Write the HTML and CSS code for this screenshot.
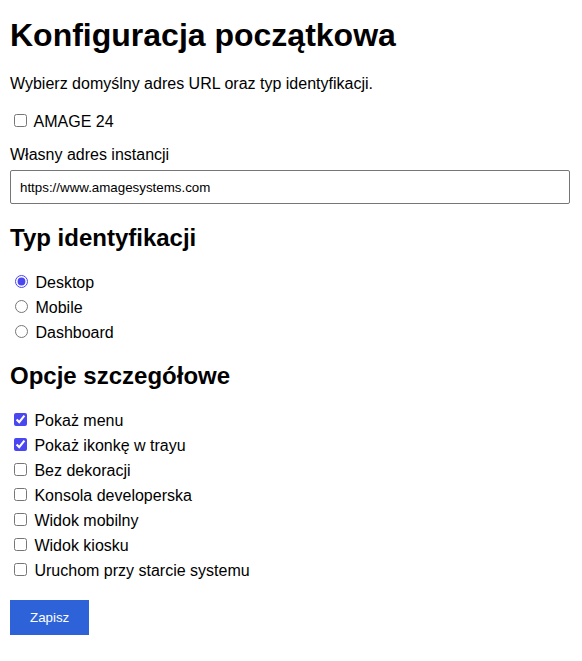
FILE: index.html
```html
<!DOCTYPE html>
<html lang="pl">
<head>
<meta charset="utf-8">
<title>Konfiguracja początkowa</title>
<link rel="stylesheet" href="styles.css">
</head>
<body>
<main class="setup">
  <h1 class="title">Konfiguracja początkowa</h1>
  <p class="intro">Wybierz domyślny adres URL oraz typ identyfikacji.</p>
  <label class="option option-first"><input type="checkbox"> AMAGE 24</label>
  <label class="field-label" for="url">Własny adres instancji</label>
  <input class="url-input" id="url" type="text" value="https://www.amagesystems.com">

  <h2 class="section section-type">Typ identyfikacji</h2>
  <div class="group group-type">
    <label class="option"><input type="radio" name="type" checked> Desktop</label>
    <label class="option"><input type="radio" name="type"> Mobile</label>
    <label class="option"><input type="radio" name="type"> Dashboard</label>
  </div>

  <h2 class="section section-options">Opcje szczegółowe</h2>
  <div class="group group-options">
    <label class="option"><input type="checkbox" checked> Pokaż menu</label>
    <label class="option"><input type="checkbox" checked> Pokaż ikonkę w trayu</label>
    <label class="option"><input type="checkbox"> Bez dekoracji</label>
    <label class="option"><input type="checkbox"> Konsola developerska</label>
    <label class="option"><input type="checkbox"> Widok mobilny</label>
    <label class="option"><input type="checkbox"> Widok kiosku</label>
    <label class="option"><input type="checkbox"> Uruchom przy starcie systemu</label>
  </div>

  <button class="save" type="button">Zapisz</button>
</main>
</body>
</html>
```

FILE: styles.css
```css
html, body {
  margin: 0;
  padding: 0;
  background: #ffffff;
}

body {
  font-family: "Liberation Sans", Arial, sans-serif;
  font-size: 16px;
  color: #000000;
  accent-color: #4a46f0;
}

.setup {
  padding: 10px;
  width: 560px;
}

.title {
  font-size: 32px;
  font-weight: bold;
  line-height: normal;
  margin: 6.5px 0 0 0;
}

.intro {
  margin: 21.7px 0 0 0;
  line-height: normal;
}

.option {
  display: block;
  line-height: 25px;
}

.option-first {
  margin-top: 15.5px;
}

.field-label {
  display: block;
  line-height: normal;
  margin-top: 12px;
}

.url-input {
  display: block;
  box-sizing: border-box;
  width: 560px;
  height: 34px;
  margin: 6.5px 0 0 0;
  padding: 0 9px;
  border: 1px solid #767676;
  border-radius: 2px;
  font-family: "Liberation Sans", Arial, sans-serif;
  font-size: 13.33px;
  color: #000000;
}

.section {
  font-size: 24px;
  font-weight: bold;
  line-height: normal;
  margin: 0;
}

.section-type {
  margin-top: 20px;
}

.section-options {
  margin-top: 17px;
}

.group-type {
  margin-top: 17.4px;
}

.group-options {
  margin-top: 18.4px;
}

.save {
  display: block;
  margin-top: 17px;
  padding: 10px 20px;
  border: none;
  border-radius: 0;
  background: #2d62d9;
  color: #ffffff;
  font-family: "Liberation Sans", Arial, sans-serif;
  font-size: 13.33px;
  line-height: 15px;
}
```
